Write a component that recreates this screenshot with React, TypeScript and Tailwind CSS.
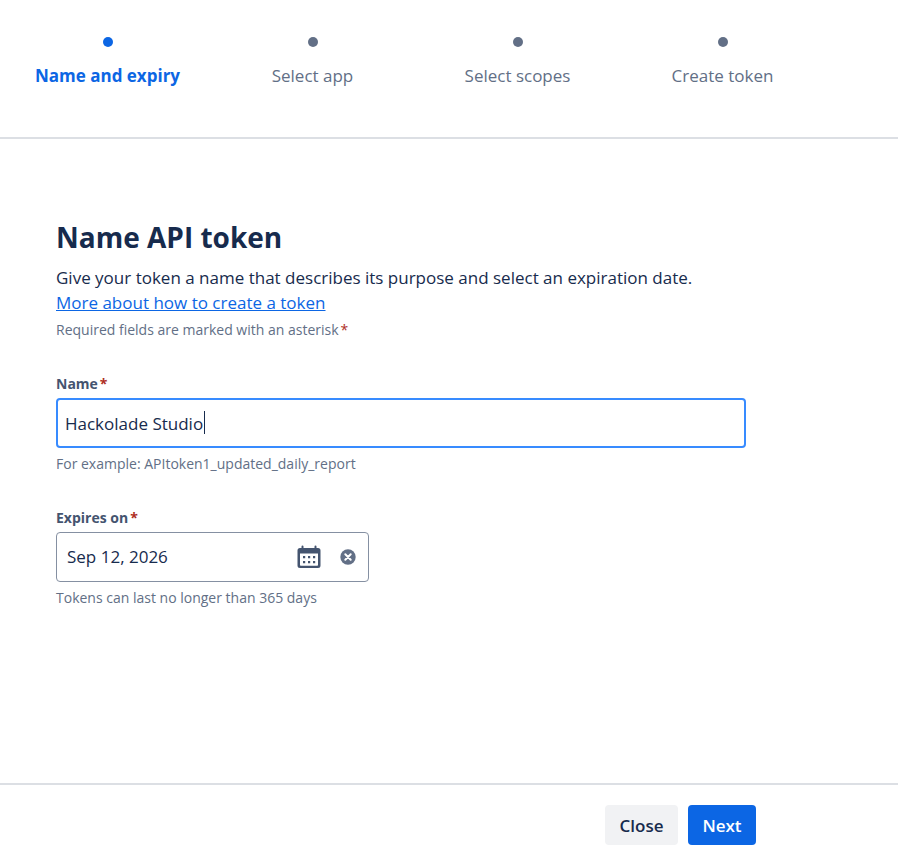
import { useState } from "react";

const steps = ["Name and expiry", "Select app", "Select scopes", "Create token"];

function Stepper({ current }: { current: number }) {
  return (
    <header className="border-b-2 border-[#dcdfe4] pt-[37px] pr-[73px] pb-12 pl-[5px]">
      <ol className="flex">
        {steps.map((step, index) => (
          <li
            key={step}
            aria-current={index === current ? "step" : undefined}
            className={
              index === current
                ? "flex flex-1 flex-col items-center gap-4 font-bold text-[#0c66e4]"
                : "flex flex-1 flex-col items-center gap-4 text-[#626f86]"
            }
          >
            <span className="size-2.5 rounded-full bg-current" />
            <span className="leading-[26px] whitespace-nowrap">{step}</span>
          </li>
        ))}
      </ol>
    </header>
  );
}

function Asterisk() {
  return <span className="ml-0.5 text-[#ae2e24]">*</span>;
}

function CalendarIcon() {
  return (
    <svg viewBox="0 0 24 24" className="size-6" aria-hidden="true">
      <path
        fill="#44546f"
        fillRule="evenodd"
        d="M4.500 1.500a1 1 0 0 1 2 0V3h11V1.500a1 1 0 0 1 2 0V3H21a2.500 2.500 0 0 1 2.500 2.500V20.500a2.500 2.500 0 0 1-2.500 2.500H3a2.500 2.500 0 0 1-2.500-2.500V5.500A2.500 2.500 0 0 1 3 3h1.500zM3 8.500V20a.8.8 0 0 0 .8.8h16.400a.8.8 0 0 0 .8-.8V8.500z"
      />
      <path
        fill="#44546f"
        d="M6 11h2.200v2.200H6zM11 11h2.200v2.200H11zM16 11h2.200v2.200H16zM6 16h2.200v2.200H6zM11 16h2.200v2.200H11zM16 16h2.200v2.200H16z"
      />
    </svg>
  );
}

function ClearIcon() {
  return (
    <svg viewBox="0 0 16 16" className="size-4" aria-hidden="true">
      <circle cx="8" cy="8" r="7.700" fill="#626f86" />
      <path d="m5.300 5.300 5.400 5.400m0-5.400-5.400 5.400" stroke="#fff" strokeWidth="2" strokeLinecap="round" />
    </svg>
  );
}

export default function App() {
  const [name, setName] = useState("Hackolade Studio");
  const [expiry, setExpiry] = useState("Sep 12, 2026");

  return (
    <div className="flex min-h-screen flex-col bg-white font-['Open_Sans','Noto_Sans',sans-serif] text-[17px] text-[#172b4d]">
      <Stepper current={0} />

      <main className="flex-1 pt-20 pr-[152px] pl-14">
        <h1 className="text-[28px] leading-9 font-bold">Name API token</h1>
        <p className="mt-2.5 leading-[25px]">
          Give your token a name that describes its purpose and select an expiration date.
        </p>
        <a href="#" className="block w-fit leading-[25px] text-[#0c66e4] underline">
          More about how to create a token
        </a>
        <p className="mt-[5px] text-sm leading-5 text-[#626f86]">
          Required fields are marked with an asterisk
          <Asterisk />
        </p>

        <div className="mt-[34px]">
          <label htmlFor="token-name" className="block text-sm leading-5 font-bold text-[#44546f]">
            Name
            <Asterisk />
          </label>
          <div className="relative mt-1">
            <input
              id="token-name"
              type="text"
              value={name}
              onChange={(event) => setName(event.target.value)}
              className="block h-[50px] w-full rounded border-2 border-[#388bff] px-[7px] outline-none"
            />
            <span className="absolute top-[13px] left-[148px] h-[23px] w-px bg-[#172b4d]" />
          </div>
          <p className="mt-1.5 text-sm leading-5 text-[#626f86]">
            For example: APItoken1_updated_daily_report
          </p>
        </div>

        <div className="mt-[34px]">
          <label htmlFor="token-expiry" className="block text-sm leading-5 font-bold text-[#44546f]">
            Expires on
            <Asterisk />
          </label>
          <div className="mt-1 flex h-[50px] w-[313px] items-center rounded border border-[#8590a2] pr-3 pl-2.5">
            <input
              id="token-expiry"
              type="text"
              value={expiry}
              onChange={(event) => setExpiry(event.target.value)}
              className="min-w-0 flex-1 outline-none"
            />
            <button type="button" aria-label="Open calendar">
              <CalendarIcon />
            </button>
            <button type="button" aria-label="Clear date" onClick={() => setExpiry("")} className="ml-[19px]">
              <ClearIcon />
            </button>
          </div>
          <p className="mt-1.5 text-sm leading-5 text-[#626f86]">Tokens can last no longer than 365 days</p>
        </div>
      </main>

      <footer className="flex justify-end gap-2.5 border-t-2 border-[#dcdfe4] pt-5 pr-[142px] pb-[5px] font-semibold">
        <button type="button" className="h-10 w-[73px] rounded bg-[#f1f2f4] pt-0.5">
          Close
        </button>
        <button type="button" className="h-10 w-[68px] rounded bg-[#0c66e4] pt-0.5 text-white">
          Next
        </button>
      </footer>
    </div>
  );
}
